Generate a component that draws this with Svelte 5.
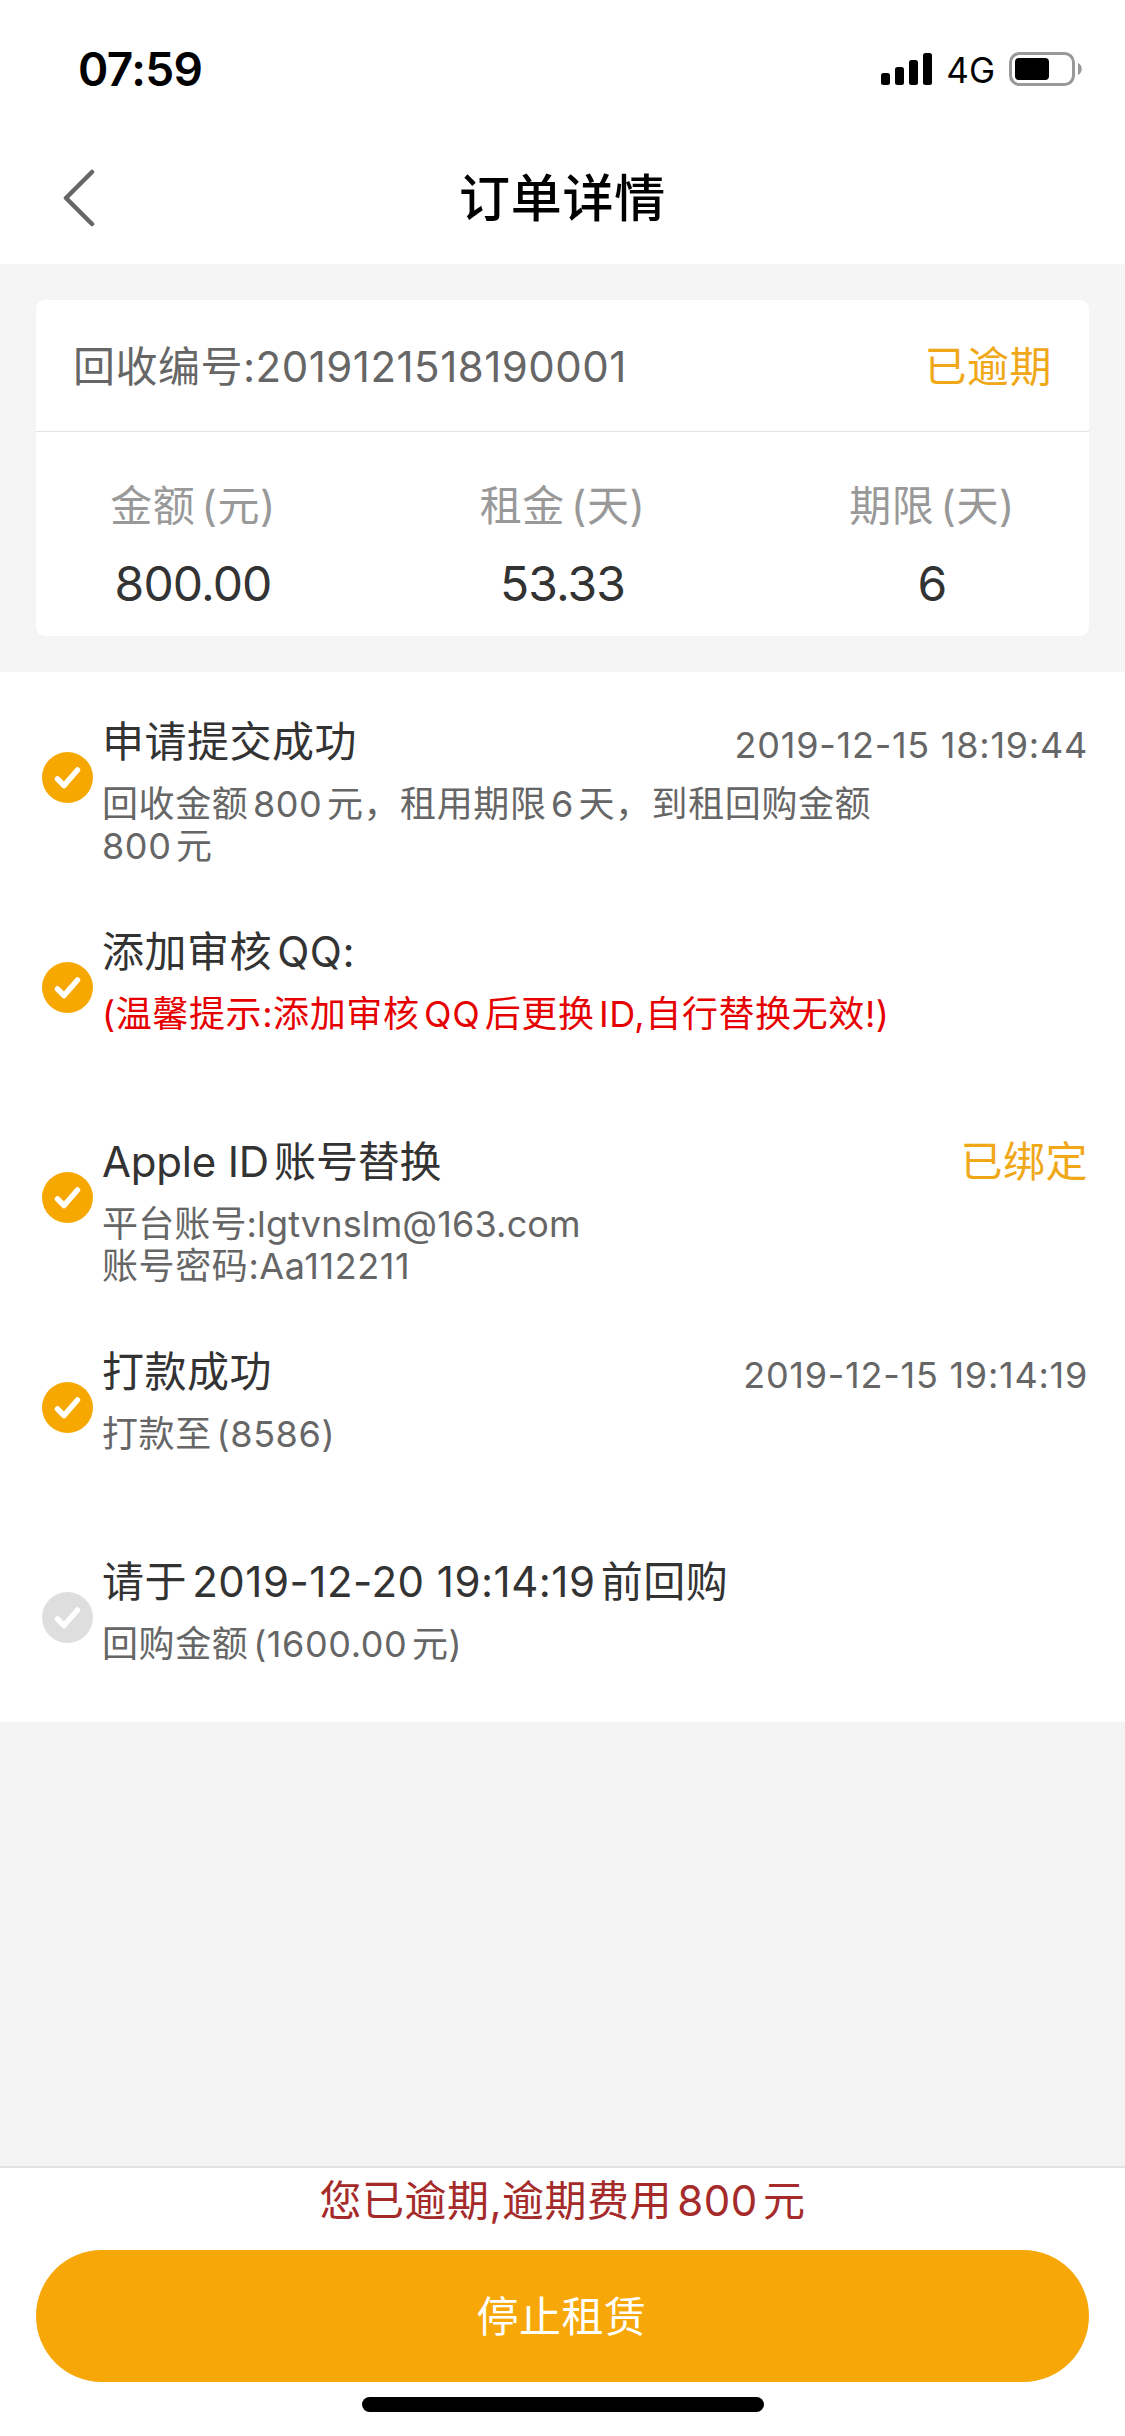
<script>
  const order = {
    no: '回收编号:2019121518190001',
    status: '已逾期',
    stats: [
      { label: '金额 (元)', value: '800.00' },
      { label: '租金 (天)', value: '53.33' },
      { label: '期限 (天)', value: '6' }
    ]
  };

  const steps = [
    {
      title: '申请提交成功',
      time: '2019-12-15 18:19:44',
      lines: ['回收金额800元，租用期限6天，到租回购金额', '800元'],
      done: true
    },
    {
      title: '添加审核QQ:',
      lines: ['(温馨提示:添加审核QQ后更换ID,自行替换无效!)'],
      warn: true,
      done: true
    },
    {
      title: 'Apple ID账号替换',
      tag: '已绑定',
      lines: ['平台账号:lgtvnslm@163.com', '账号密码:Aa112211'],
      done: true
    },
    {
      title: '打款成功',
      time: '2019-12-15 19:14:19',
      lines: ['打款至 (8586)'],
      done: true
    },
    {
      title: '请于2019-12-20 19:14:19前回购',
      lines: ['回购金额 (1600.00元)'],
      done: false
    }
  ];

  // words in latin letters are set a little tighter than digits and hanzi
  const isLatin = (text) => /[a-z]{4}/.test(text);
</script>

<div class="page">
  <div class="status-bar">
    <span class="clock">07:59</span>
    <div class="indicators">
      <svg class="signal" width="51" height="32" viewBox="0 0 51 32">
        <rect x="0" y="20" width="9" height="12" rx="2.5" />
        <rect x="14" y="14" width="9" height="18" rx="2.5" />
        <rect x="28" y="7" width="9" height="25" rx="2.5" />
        <rect x="42" y="0" width="9" height="32" rx="2.5" />
      </svg>
      <span class="network">4G</span>
      <svg class="battery" width="74" height="34" viewBox="0 0 74 34">
        <rect x="1.5" y="1.5" width="63" height="31" rx="9" fill="none" stroke="#999" stroke-width="3" />
        <rect x="6" y="6" width="34" height="22" rx="4" />
        <path d="M69 11c5 2 5 10 0 12z" fill="#999" />
      </svg>
    </div>
  </div>

  <header class="nav">
    <svg class="back" width="34" height="58" viewBox="0 0 34 58">
      <path d="M30 3L4 29l26 26" fill="none" stroke="#666" stroke-width="4.5" stroke-linecap="round" stroke-linejoin="round" />
    </svg>
    <h1>订单详情</h1>
  </header>

  <section class="summary">
    <div class="card">
      <div class="card-head">
        <span>{order.no}</span>
        <span class="accent">{order.status}</span>
      </div>
      <div class="stats">
        {#each order.stats as stat}
          <div class="stat">
            <span class="stat-label">{stat.label}</span>
            <span class="stat-value">{stat.value}</span>
          </div>
        {/each}
      </div>
    </div>
  </section>

  <ul class="steps">
    {#each steps as step}
      <li class="step">
        <svg class="check" class:done={step.done} width="51" height="51" viewBox="0 0 51 51">
          <circle cx="25.5" cy="25.5" r="25.5" />
          <path d="M15.5 27l6.500 6.500L35.500 18" />
        </svg>
        <div class="step-body">
          <div class="step-head">
            <span class="step-title" class:tight={isLatin(step.title)}>{step.title}</span>
            {#if step.time}<span class="time">{step.time}</span>{/if}
            {#if step.tag}<span class="accent">{step.tag}</span>{/if}
          </div>
          <div class="step-desc" class:warn={step.warn}>
            {#each step.lines as line}
              <p class:tight={isLatin(line)}>{line}</p>
            {/each}
          </div>
        </div>
      </li>
    {/each}
  </ul>

  <footer class="footer">
    <p class="overdue">您已逾期,逾期费用800元</p>
    <button class="stop">停止租赁</button>
    <div class="home-indicator"></div>
  </footer>
</div>

<style>
  :global(body) {
    margin: 0;
    background: #f3f3f3;
  }

  .page {
    display: flex;
    flex-direction: column;
    width: 1125px;
    height: 2436px;
    background: #f3f3f3;
    color: #333;
    font-family: Inter, 'Noto Sans CJK SC', sans-serif;
    font-size: 42px;
    letter-spacing: 0.5px;
    text-autospace: normal;
  }

  .status-bar {
    display: flex;
    align-items: center;
    justify-content: space-between;
    height: 132px;
    padding: 6px 42px 0 78px;
    box-sizing: border-box;
    background: #fff;
    color: #000;
    letter-spacing: 0;
  }

  .clock {
    font-size: 46px;
    font-weight: 600;
    letter-spacing: -0.6px;
  }

  .indicators {
    display: flex;
    align-items: center;
    gap: 14px;
  }

  .network {
    padding-top: 2px;
    font-size: 35px;
    line-height: 36px;
  }

  .nav {
    display: flex;
    align-items: center;
    height: 132px;
    padding: 0 62px;
    background: #fff;
  }

  .nav h1 {
    flex: 1;
    margin: 2px 34px 0 0;
    color: #000;
    font-size: 51px;
    font-weight: 500;
    letter-spacing: 0.8px;
    line-height: 60px;
    text-align: center;
  }

  .summary {
    height: 408px;
    padding: 36px;
    box-sizing: border-box;
    background: #f5f5f5;
  }

  .card {
    height: 336px;
    border-radius: 9px;
    background: #fff;
  }

  .card-head {
    display: flex;
    align-items: center;
    justify-content: space-between;
    height: 132px;
    padding: 2px 37px 0 37px;
    box-sizing: border-box;
    border-bottom: 1px solid #e2e2e2;
    color: #666;
    line-height: 60px;
  }

  .accent {
    color: #f0a818;
  }

  .stats {
    display: flex;
    justify-content: space-between;
    padding: 44px 77px 0 77px;
  }

  .stat {
    display: flex;
    flex-direction: column;
    align-items: center;
    gap: 18px;
    width: 160px;
    line-height: 60px;
    white-space: nowrap;
  }

  .stat-label {
    color: #999;
    word-spacing: -6px;
  }

  .stat-value {
    font-size: 48px;
    letter-spacing: -0.9px;
  }

  .steps {
    margin: 0;
    padding: 0;
    list-style: none;
    background: #fff;
  }

  .step {
    display: flex;
    align-items: center;
    gap: 9px;
    height: 210px;
    padding: 0 37px 0 42px;
    box-sizing: border-box;
  }

  .check {
    flex: none;
    fill: #dedede;
  }

  .check.done {
    fill: #f7a800;
  }

  .check path {
    fill: none;
    stroke: #fff;
    stroke-width: 5.5;
    stroke-linecap: round;
    stroke-linejoin: round;
  }

  .step-body {
    flex: 1;
    height: 210px;
    padding-top: 40px;
    box-sizing: border-box;
    white-space: nowrap;
  }

  .step-head {
    display: flex;
    align-items: center;
    justify-content: space-between;
    height: 60px;
    line-height: 60px;
  }

  .time {
    padding-top: 6px;
    color: #666;
    font-size: 36px;
    letter-spacing: 0.75px;
  }

  .step-desc {
    padding-top: 11px;
    color: #666;
    font-size: 36px;
    line-height: 42px;
    letter-spacing: 0.6px;
    word-spacing: -6px;
  }

  .step-desc.warn {
    color: #e60000;
  }

  .step-desc p {
    margin: 0;
  }

  .step-title.tight {
    letter-spacing: -0.2px;
  }

  .step-desc .tight {
    letter-spacing: 0.15px;
  }

  .footer {
    display: flex;
    flex-direction: column;
    align-items: center;
    height: 270px;
    margin-top: auto;
    box-sizing: border-box;
    border-top: 2px solid #e2e2e2;
    background: #fff;
  }

  .overdue {
    height: 82px;
    margin: 0;
    color: #a52a2a;
    line-height: 66px;
  }

  .stop {
    width: 1053px;
    height: 132px;
    padding: 0 2px 5px 0;
    border: 0;
    border-radius: 66px;
    background: #f7a808;
    color: #fff;
    font-family: inherit;
    font-size: 42px;
    letter-spacing: 0.5px;
  }

  .home-indicator {
    width: 402px;
    height: 15px;
    margin-top: 15px;
    border-radius: 8px;
    background: #000;
  }
</style>
